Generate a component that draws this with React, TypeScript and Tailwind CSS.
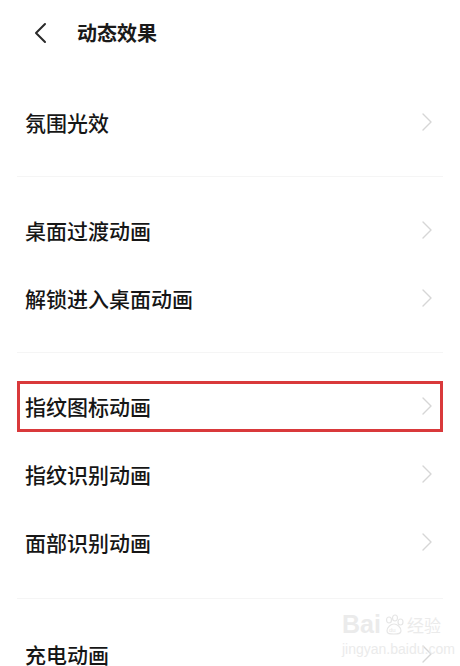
import React from 'react';

interface RowProps {
  label: string;
  highlight?: boolean;
}

const font = { fontFamily: '"Noto Sans CJK SC", "Noto Sans", sans-serif' };

const Chevron: React.FC = () => (
  <svg width="12" height="20" viewBox="0 0 12 20" fill="none" className="shrink-0">
    <path d="M2 2l8 8-8 8" stroke="#d6d6d6" strokeWidth="1.4" strokeLinecap="round" strokeLinejoin="round" />
  </svg>
);

const Row: React.FC<RowProps> = ({ label, highlight }) => {
  return (
    <div className="h-[68px] px-[17px] flex items-center">
      <div
        className={
          highlight
            ? 'h-[51px] w-full flex items-center justify-between pl-[5px] pr-[7px] border-[3px] border-[#d9393b]'
            : 'h-[51px] w-full flex items-center justify-between pl-[5px] pr-[7px] border-[3px] border-transparent'
        }
      >
        <span className="text-[21px] text-[#161616] font-medium leading-none">{label}</span>
        <Chevron />
      </div>
    </div>
  );
};

const Divider: React.FC<{ h: string }> = ({ h }) => (
  <div className={`${h} px-[17px] flex items-center`}>
    <div className="h-px w-full bg-[#f5f5f5]" />
  </div>
);

const groups = [
  ['氛围光效'],
  ['桌面过渡动画', '解锁进入桌面动画'],
  ['指纹图标动画', '指纹识别动画', '面部识别动画'],
  ['充电动画'],
];

export default function App() {
  return (
    <div className="relative w-[460px] h-[666px] overflow-hidden bg-white" style={font}>
      <div className="h-[66px] flex items-center pl-[33px]">
        <svg width="14" height="22" viewBox="0 0 14 22" fill="none">
          <path d="M12 2L3 11l9 9" stroke="#2a2a2a" strokeWidth="2" strokeLinecap="round" strokeLinejoin="round" />
        </svg>
        <span className="ml-[30px] text-[20px] font-semibold text-[#1a1a1a] leading-none">动态效果</span>
      </div>
      <div className="mt-[22px]">
        {groups.map((g, gi) => (
          <div key={gi}>
            {gi > 0 && <Divider h={gi === 3 ? 'h-[44px]' : 'h-[40px]'} />}
            {g.map((label) => (
              <Row key={label} label={label} highlight={label === '指纹图标动画'} />
            ))}
          </div>
        ))}
      </div>
      <div className="absolute left-[342px] top-[612px] flex flex-col items-start text-[#ebebeb]">
        <div className="flex items-center gap-[2px]">
          <span className="text-[25px] leading-none font-bold" style={{ fontFamily: '"Liberation Sans", sans-serif' }}>Bai</span>
          <svg width="22" height="22" viewBox="0 0 22 22" fill="none">
            <ellipse cx="6" cy="6" rx="2.5" ry="3" stroke="#e6e6e6" strokeWidth="1.2" />
            <ellipse cx="12" cy="4" rx="2.5" ry="3" stroke="#e6e6e6" strokeWidth="1.2" />
            <ellipse cx="17.5" cy="8" rx="2.5" ry="3" stroke="#e6e6e6" strokeWidth="1.2" />
            <path d="M4 17c0-4 4-7 7-7s7 3 7 7c0 3-3 3-7 3s-7 0-7-3z" stroke="#e6e6e6" strokeWidth="1.2" />
            <text x="6" y="18" fontSize="6" fill="#e6e6e6" fontFamily="Liberation Sans">du</text>
          </svg>
          <span className="text-[17px] leading-none">经验</span>
        </div>
        <span className="text-[14px] leading-none mt-[5px]" style={{ fontFamily: '"Liberation Sans", sans-serif' }}>jingyan.baidu.com</span>
      </div>
    </div>
  );
}
